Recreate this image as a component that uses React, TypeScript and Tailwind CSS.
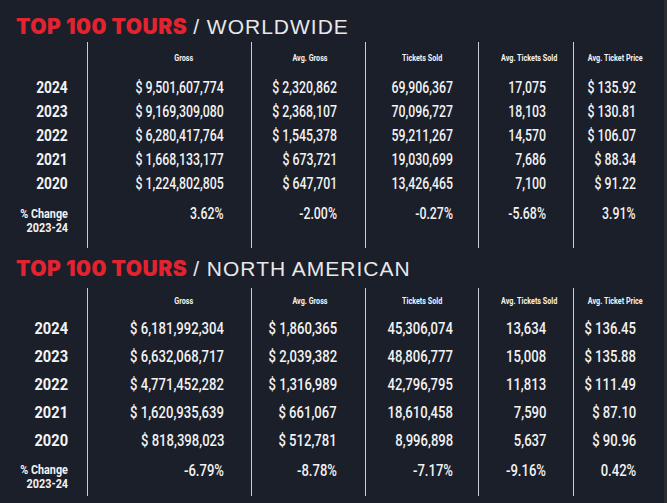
import React from "react";

type Table = {
  region: string;
  rows: { year: string; values: string[] }[];
  change: string[];
};

const worldwide: Table = {
  region: "WORLDWIDE",
  rows: [
    { year: "2024", values: ["$ 9,501,607,774", "$ 2,320,862", "69,906,367", "17,075", "$ 135.92"] },
    { year: "2023", values: ["$ 9,169,309,080", "$ 2,368,107", "70,096,727", "18,103", "$ 130.81"] },
    { year: "2022", values: ["$ 6,280,417,764", "$ 1,545,378", "59,211,267", "14,570", "$ 106.07"] },
    { year: "2021", values: ["$ 1,668,133,177", "$ 673,721", "19,030,699", "7,686", "$ 88.34"] },
    { year: "2020", values: ["$ 1,224,802,805", "$ 647,701", "13,426,465", "7,100", "$ 91.22"] },
  ],
  change: ["3.62%", "-2.00%", "-0.27%", "-5.68%", "3.91%"],
};

const northAmerican: Table = {
  region: "NORTH AMERICAN",
  rows: [
    { year: "2024", values: ["$ 6,181,992,304", "$ 1,860,365", "45,306,074", "13,634", "$ 136.45"] },
    { year: "2023", values: ["$ 6,632,068,717", "$ 2,039,382", "48,806,777", "15,008", "$ 135.88"] },
    { year: "2022", values: ["$ 4,771,452,282", "$ 1,316,989", "42,796,795", "11,813", "$ 111.49"] },
    { year: "2021", values: ["$ 1,620,935,639", "$ 661,067", "18,610,458", "7,590", "$ 87.10"] },
    { year: "2020", values: ["$ 818,398,023", "$ 512,781", "8,996,898", "5,637", "$ 90.96"] },
  ],
  change: ["-6.79%", "-8.78%", "-7.17%", "-9.16%", "0.42%"],
};

// width, value padding-right, header offset
const columns = [
  { label: "Gross", width: "w-[164px]", pr: "pr-[27px]", head: "pl-[28px]" },
  { label: "Avg. Gross", width: "w-[114px]", pr: "pr-[28px]", head: "pl-[2px]" },
  { label: "Tickets Sold", width: "w-[113px]", pr: "pr-[25px]", head: "pl-0" },
  { label: "Avg. Tickets Sold", width: "w-[95px]", pr: "pr-[27px]", head: "pl-[6px]" },
  { label: "Avg. Ticket Price", width: "w-[91px]", pr: "pr-[28px]", head: "pr-[7px]" },
];

function Title({ region }: { region: string }) {
  return (
    <div className="flex h-[21px] items-baseline whitespace-nowrap pl-[16px] text-[21px] leading-[21px]">
      <span className="font-['Inter'] font-black tracking-[0.5px] text-[#e32430]">TOP 100 TOURS</span>
      <span className="ml-[6px] font-['Liberation_Sans'] font-normal tracking-[1px] text-[#e8e8ea]">/ {region}</span>
    </div>
  );
}

function StatTable({ data, big }: { data: Table; big?: boolean }) {
  const rowH = big ? "h-[28px]" : "h-[24px]";
  const numSize = big ? "text-[17px]" : "text-[16px]";
  const top = big ? "pt-[7px]" : "pt-[10px]";
  const gap = big ? "mb-[6px]" : "mb-[10px]";
  const changePad = big ? "pt-[8px] pb-[5px]" : "pt-[11px] pb-[13px]";

  return (
    <div className="flex">
      <div className={`w-[87px] ${top}`}>
        <div className={`h-[14px] ${gap}`} />
        {data.rows.map((r) => (
          <div key={r.year} className={`flex ${rowH} items-center justify-end pr-[19px]`}>
            <span className={`inline-block origin-right scale-x-[0.86] ${numSize} font-bold`}>{r.year}</span>
          </div>
        ))}
        <div className={`flex flex-col items-end pr-[19px] ${changePad}`}>
          <span className="inline-block h-[14px] origin-right scale-x-[0.9] text-[12px] font-bold leading-[14px]">% Change</span>
          <span className="inline-block h-[14px] origin-right scale-x-[0.9] text-[12px] font-bold leading-[14px]">2023-24</span>
        </div>
      </div>
      {columns.map((c, i) => (
        <div key={c.label} className={`${c.width} border-l border-[#c9ccd2] ${top}`}>
          <div className={`flex h-[14px] items-center justify-center ${c.head} ${gap}`}>
            <span className="inline-block scale-x-[0.8] whitespace-nowrap text-[9px] font-bold">{c.label}</span>
          </div>
          {data.rows.map((r) => (
            <div key={r.year} className={`flex ${rowH} items-center justify-end ${c.pr}`}>
              <span className={`inline-block origin-right scale-x-[0.77] whitespace-nowrap ${numSize} font-medium`}>{r.values[i]}</span>
            </div>
          ))}
          <div className={`flex flex-col items-end ${c.pr} ${changePad}`}>
            <span className={`inline-block h-[14px] origin-right scale-x-[0.77] ${numSize} font-medium leading-[14px]`}>{data.change[i]}</span>
            <span className="h-[14px]" />
          </div>
        </div>
      ))}
    </div>
  );
}

export default function App() {
  return (
    <div className="h-[503px] w-[667px] overflow-hidden border-r-[3px] border-[#2b2d31] bg-[#1b1f29] font-['Roboto'] text-[#f3f3f4]">
      <div className="pt-[16px]">
        <Title region={worldwide.region} />
      </div>
      <div className="mt-[5px]">
        <StatTable data={worldwide} />
      </div>
      <div className="mt-[10px]">
        <Title region={northAmerican.region} />
      </div>
      <div className="mt-[9px]">
        <StatTable data={northAmerican} big />
      </div>
    </div>
  );
}
